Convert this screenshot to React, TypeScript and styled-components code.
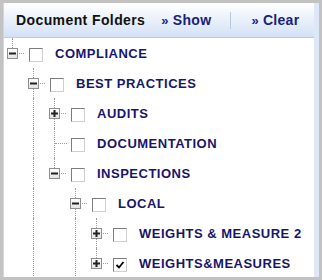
import styled, { createGlobalStyle } from "styled-components";

const GlobalStyle = createGlobalStyle`
  html, body {
    margin: 0;
    padding: 0;
    background: #ffffff;
  }
  body {
    font-family: "Liberation Sans", Arial, sans-serif;
  }
`;

const Frame = styled.div`
  width: 322px;
  height: 280px;
  box-sizing: border-box;
  border: 3px solid #c2c2c2;
  overflow: hidden;
`;

const Panel = styled.div`
  height: 100%;
  box-sizing: border-box;
  border-left: 1px solid #c9d8ee;
  border-right: 5px solid #dde7f5;
  background: #ffffff;
  overflow: hidden;
`;

const Header = styled.div`
  height: 34px;
  border-bottom: 1px solid #b9cce8;
  background: linear-gradient(#ffffff, #d3e1f6);
  display: flex;
  align-items: center;
  padding-left: 12px;
`;

const Title = styled.div`
  font-size: 14px;
  font-weight: 700;
  letter-spacing: 0.4px;
  color: #111111;
  margin-right: 16px;
`;

const Action = styled.a`
  font-size: 14px;
  font-weight: 700;
  letter-spacing: 0.3px;
  color: #1a2377;
  text-decoration: none;
  cursor: pointer;
`;

const Chevrons = styled.span`
  font-size: 13px;
  margin-right: 4px;
`;

const Divider = styled.div`
  width: 1px;
  height: 17px;
  background: #b7c8e1;
  margin: 0 20px 0 19px;
`;

const Tree = styled.div`
  display: flex;
  flex-direction: column;
`;

const Row = styled.div`
  height: 30px;
  display: flex;
  align-items: stretch;
`;

const Guide = styled.div`
  width: 21px;
  flex: none;
  display: flex;
`;

const GuideLine = styled.div<{ $on: boolean }>`
  margin-left: 8px;
  width: 0;
  border-left: 1px dotted ${(p) => (p.$on ? "#9c9c9c" : "transparent")};
`;

const Joint = styled.div`
  width: 25px;
  flex: none;
  display: grid;
  grid-template-columns: 3px 11px 1fr;
  grid-template-rows: 10px 11px 1fr;
`;

const Stem = styled.div<{ $on: boolean; $row: string }>`
  grid-column: 2;
  grid-row: ${(p) => p.$row};
  justify-self: center;
  width: 0;
  border-left: 1px dotted ${(p) => (p.$on ? "#9c9c9c" : "transparent")};
`;

const Branch = styled.div<{ $leaf?: boolean }>`
  grid-column: ${(p) => (p.$leaf ? "2 / 4" : "3")};
  grid-row: 2;
  align-self: center;
  height: 0;
  border-top: 1px dotted #9c9c9c;
  margin-left: ${(p) => (p.$leaf ? "6px" : "1px")};
  width: ${(p) => (p.$leaf ? "12px" : "5px")};
`;

const Toggle = styled.svg`
  grid-column: 2;
  grid-row: 2;
  display: block;
`;

const Check = styled.div<{ $checked?: boolean }>`
  width: 14px;
  height: 14px;
  flex: none;
  box-sizing: border-box;
  align-self: center;
  margin-top: 4px;
  border-style: solid;
  border-width: 1px;
  border-color: #7d7d7d #cfcfcf #cfcfcf #7d7d7d;
  background: #ffffff;
  display: flex;
  align-items: center;
  justify-content: center;
`;

const Label = styled.span`
  align-self: center;
  margin-left: 12px;
  font-size: 13px;
  font-weight: 700;
  letter-spacing: 0.5px;
  color: #16166c;
  white-space: nowrap;
`;

type Node = {
  label: string;
  guides: boolean[];
  toggle?: "plus" | "minus";
  up: boolean;
  down: boolean;
  checked?: boolean;
};

const nodes: Node[] = [
  { label: "COMPLIANCE", guides: [], toggle: "minus", up: true, down: false },
  { label: "BEST PRACTICES", guides: [false], toggle: "minus", up: true, down: true },
  { label: "AUDITS", guides: [false, true], toggle: "plus", up: true, down: true },
  { label: "DOCUMENTATION", guides: [false, true], up: true, down: true },
  { label: "INSPECTIONS", guides: [false, true], toggle: "minus", up: true, down: false },
  { label: "LOCAL", guides: [false, true, false], toggle: "minus", up: true, down: true },
  { label: "WEIGHTS & MEASURE 2", guides: [false, true, false, true], toggle: "plus", up: true, down: true },
  { label: "WEIGHTS&MEASURES", guides: [false, true, false, true], toggle: "plus", up: true, down: false, checked: true },
];

function ToggleBox({ kind }: { kind: "plus" | "minus" }) {
  return (
    <Toggle width="11" height="11" viewBox="0 0 11 11">
      <defs>
        <linearGradient id="tg" x1="0" y1="0" x2="0" y2="1">
          <stop offset="0" stopColor="#ffffff" />
          <stop offset="1" stopColor="#e2e2e2" />
        </linearGradient>
      </defs>
      <rect x="0.5" y="0.5" width="10" height="10" fill="url(#tg)" stroke="#8e8e8e" />
      <rect x="2" y="4.5" width="7" height="2" fill="#222222" />
      {kind === "plus" && <rect x="4.5" y="2" width="2" height="7" fill="#222222" />}
    </Toggle>
  );
}

function TreeRow({ node }: { node: Node }) {
  return (
    <Row>
      {node.guides.map((on, i) => (
        <Guide key={i}>
          <GuideLine $on={on} />
        </Guide>
      ))}
      <Joint>
        {node.toggle ? (
          <>
            <Stem $on={node.up} $row="1" />
            <ToggleBox kind={node.toggle} />
            <Stem $on={node.down} $row="3" />
            <Branch />
          </>
        ) : (
          <>
            <Stem $on $row="1 / 4" />
            <Branch $leaf />
          </>
        )}
      </Joint>
      <Check $checked={node.checked}>
        {node.checked && (
          <svg width="10" height="10" viewBox="0 0 10 10">
            <path d="M1.5 5 L4 7.5 L8.5 2" fill="none" stroke="#000000" strokeWidth="1.8" />
          </svg>
        )}
      </Check>
      <Label>{node.label}</Label>
    </Row>
  );
}

export default function App() {
  return (
    <>
      <GlobalStyle />
      <Frame>
        <Panel>
          <Header>
            <Title>Document Folders</Title>
            <Action>
              <Chevrons>»</Chevrons>Show
            </Action>
            <Divider />
            <Action>
              <Chevrons>»</Chevrons>Clear
            </Action>
          </Header>
          <Tree>
            {nodes.map((n) => (
              <TreeRow key={n.label} node={n} />
            ))}
          </Tree>
        </Panel>
      </Frame>
    </>
  );
}
